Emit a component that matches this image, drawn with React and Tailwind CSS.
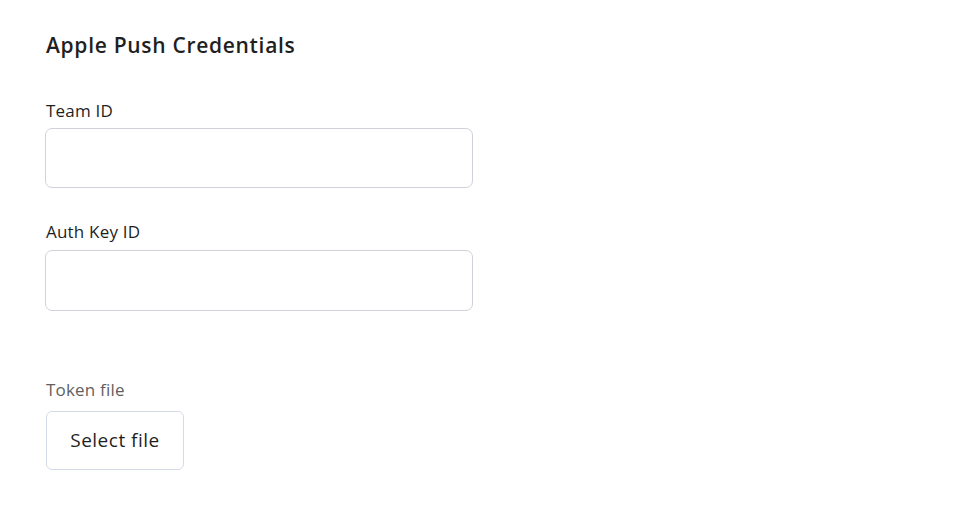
export default function App() {
  return (
    <div className="min-h-[516px] w-[958px] bg-white pl-[46px] pt-[30px] text-[#1f1f1f]" style={{ fontFamily: "'Open Sans', sans-serif" }}>
      <h1 className="text-[21px] font-semibold leading-[30px] tracking-[0.7px]">Apple Push Credentials</h1>
      <div className="mt-[40px] flex w-[428px] flex-col">
        <label className="text-[17px] leading-[22px] tracking-[0.2px]">Team ID</label>
        <input className="-ml-px mt-[6px] h-[60px] w-[428px] rounded-[7px] border border-[#cfd2d8] bg-white outline-none" />
        <label className="mt-[33px] text-[17px] leading-[22px] tracking-[0.2px]">Auth Key ID</label>
        <input className="-ml-px mt-[7px] h-[61px] w-[428px] rounded-[7px] border border-[#cfd2d8] bg-white outline-none" />
        <label className="mt-[68px] text-[17px] leading-[22px] tracking-[0.2px] text-[#5f5f5f]">Token file</label>
        <div className="mt-[10px]">
          <button className="h-[59px] w-[138px] rounded-[6px] border border-[#d4dbe8] bg-white text-[19px] tracking-[0.5px] text-[#1f1f1f]">Select file</button>
        </div>
      </div>
    </div>
  );
}
